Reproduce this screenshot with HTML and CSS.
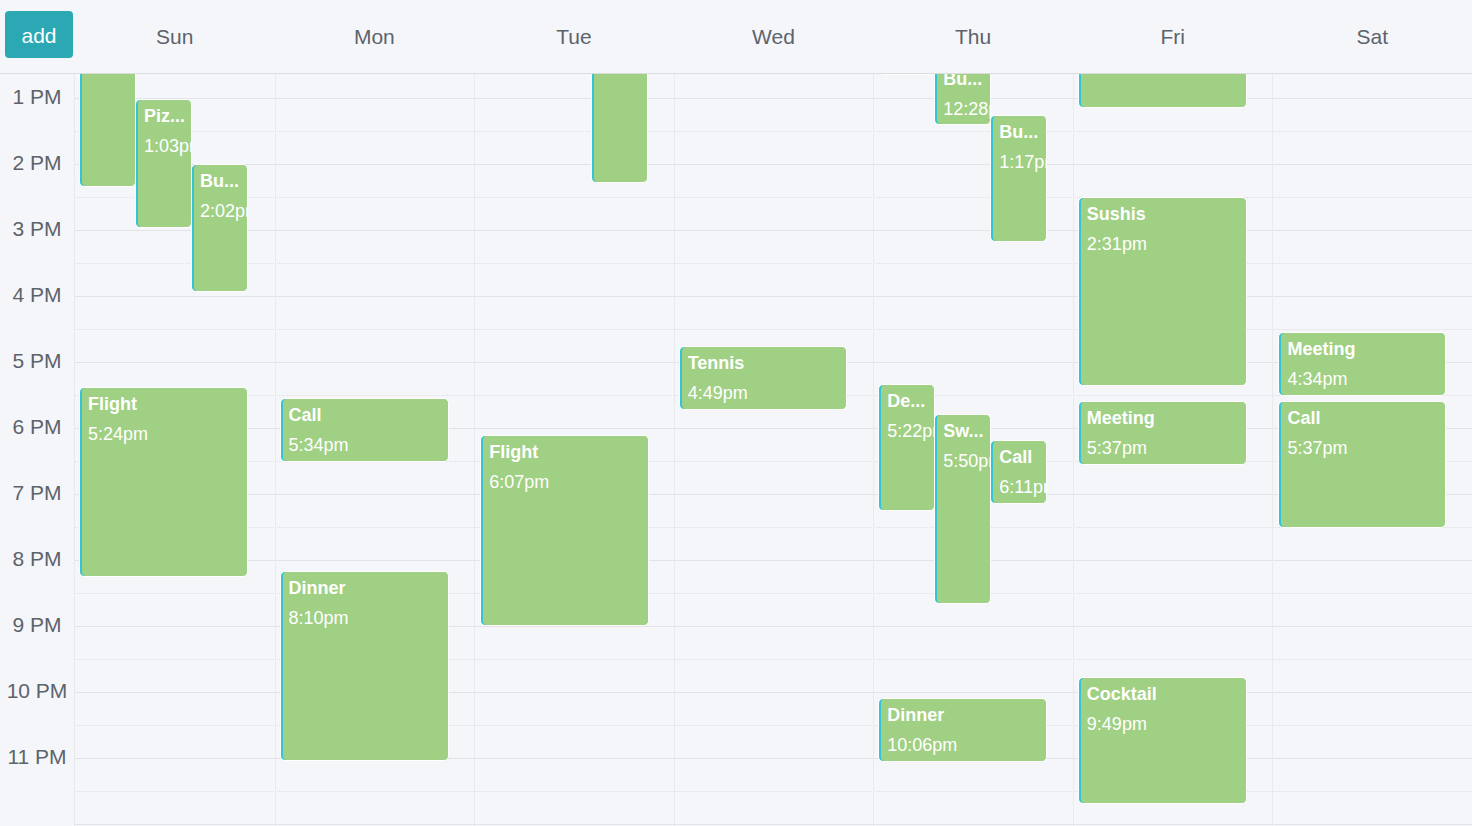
FILE: index.html
```html
<!DOCTYPE html>
<html lang="en">
<head>
<meta charset="utf-8">
<title>Week view</title>
<link rel="stylesheet" href="styles.css">
</head>
<body>
<div class="app">
  <header class="week-header">
    <div class="corner"><button class="add-btn">add</button></div>
    <div class="day-name">Sun</div>
    <div class="day-name">Mon</div>
    <div class="day-name">Tue</div>
    <div class="day-name">Wed</div>
    <div class="day-name">Thu</div>
    <div class="day-name">Fri</div>
    <div class="day-name">Sat</div>
  </header>
  <div class="viewport">
    <div class="scroll">
      <div class="hours">
        <div class="hour-label"></div>
        <div class="hour-label">1 PM</div>
        <div class="hour-label">2 PM</div>
        <div class="hour-label">3 PM</div>
        <div class="hour-label">4 PM</div>
        <div class="hour-label">5 PM</div>
        <div class="hour-label">6 PM</div>
        <div class="hour-label">7 PM</div>
        <div class="hour-label">8 PM</div>
        <div class="hour-label">9 PM</div>
        <div class="hour-label">10 PM</div>
        <div class="hour-label">11 PM</div>
      </div>
      <div class="days">
        <div class="lines">
          <div class="half solid"></div><div class="half dotted"></div>
          <div class="half solid"></div><div class="half dotted"></div>
          <div class="half solid"></div><div class="half dotted"></div>
          <div class="half solid"></div><div class="half dotted"></div>
          <div class="half solid"></div><div class="half dotted"></div>
          <div class="half solid"></div><div class="half dotted"></div>
          <div class="half solid"></div><div class="half dotted"></div>
          <div class="half solid"></div><div class="half dotted"></div>
          <div class="half solid"></div><div class="half dotted"></div>
          <div class="half solid"></div><div class="half dotted"></div>
          <div class="half solid"></div><div class="half dotted"></div>
          <div class="half solid"></div><div class="half dotted"></div>
          <div class="half solid end"></div>
        </div>

        <div class="day col-1">
          <div class="event" style="top:-67px;height:222px;left:4px;width:57px"></div>
          <div class="event" style="top:67px;height:129px;left:60px;width:57px"><div class="ev-title">Piz...</div><div class="ev-time">1:03pm</div></div>
          <div class="event" style="top:132px;height:128px;left:116px;width:57px"><div class="ev-title">Bu...</div><div class="ev-time">2:02pm</div></div>
          <div class="event" style="top:355px;height:190px;left:4px;width:169px"><div class="ev-title">Flight</div><div class="ev-time">5:24pm</div></div>
        </div>

        <div class="day col-2">
          <div class="event" style="top:366px;height:64px;left:4px;width:169px"><div class="ev-title">Call</div><div class="ev-time">5:34pm</div></div>
          <div class="event" style="top:539px;height:190px;left:4px;width:169px"><div class="ev-title">Dinner</div><div class="ev-time">8:10pm</div></div>
        </div>

        <div class="day col-3">
          <div class="event" style="top:-67px;height:218px;left:116px;width:57px"></div>
          <div class="event" style="top:403px;height:191px;left:5px;width:169px"><div class="ev-title">Flight</div><div class="ev-time">6:07pm</div></div>
        </div>

        <div class="day col-4">
          <div class="event" style="top:314px;height:64px;left:4px;width:168px"><div class="ev-title">Tennis</div><div class="ev-time">4:49pm</div></div>
        </div>

        <div class="day col-5">
          <div class="event" style="top:-67px;height:110px;left:4px;width:57px"></div>
          <div class="event" style="top:30px;height:63px;left:60px;width:57px"><div class="ev-title">Bu...</div><div class="ev-time">12:28pm</div></div>
          <div class="event" style="top:83px;height:127px;left:116px;width:57px"><div class="ev-title">Bu...</div><div class="ev-time">1:17pm</div></div>
          <div class="event" style="top:352px;height:127px;left:4px;width:57px"><div class="ev-title">De...</div><div class="ev-time">5:22pm</div></div>
          <div class="event" style="top:382px;height:190px;left:60px;width:57px"><div class="ev-title">Sw...</div><div class="ev-time">5:50pm</div></div>
          <div class="event" style="top:408px;height:64px;left:116px;width:57px"><div class="ev-title">Call</div><div class="ev-time">6:11pm</div></div>
          <div class="event" style="top:666px;height:64px;left:4px;width:169px"><div class="ev-title">Dinner</div><div class="ev-time">10:06pm</div></div>
        </div>

        <div class="day col-6">
          <div class="event" style="top:-34px;height:110px;left:4px;width:169px"></div>
          <div class="event" style="top:165px;height:189px;left:4px;width:169px"><div class="ev-title">Sushis</div><div class="ev-time">2:31pm</div></div>
          <div class="event" style="top:369px;height:64px;left:4px;width:169px"><div class="ev-title">Meeting</div><div class="ev-time">5:37pm</div></div>
          <div class="event" style="top:645px;height:127px;left:4px;width:169px"><div class="ev-title">Cocktail</div><div class="ev-time">9:49pm</div></div>
        </div>

        <div class="day col-7">
          <div class="event" style="top:300px;height:64px;left:5px;width:168px"><div class="ev-title">Meeting</div><div class="ev-time">4:34pm</div></div>
          <div class="event" style="top:369px;height:127px;left:5px;width:168px"><div class="ev-title">Call</div><div class="ev-time">5:37pm</div></div>
        </div>
      </div>
    </div>
  </div>
</div>
</body>
</html>
```

FILE: styles.css
```css
* { box-sizing: border-box; }

html, body {
  margin: 0;
  padding: 0;
  background: #f5f6fa;
}

body {
  font-family: "Liberation Sans", Arial, Helvetica, sans-serif;
  color: #5d636b;
  overflow: hidden;
}

.app {
  width: 1472px;
  height: 826px;
  display: flex;
  flex-direction: column;
  background: #f5f6fa;
}

.week-header {
  height: 74px;
  flex: 0 0 74px;
  display: flex;
  align-items: stretch;
  border-bottom: 1px solid #dcdde1;
  background: #f5f6fa;
  position: relative;
  z-index: 2;
}

.corner {
  width: 75px;
  flex: 0 0 75px;
  padding: 11px 0 0 5px;
}

.add-btn {
  width: 68px;
  height: 47px;
  border: none;
  border-radius: 4px;
  background: #2ba8b4;
  color: #ffffff;
  font-family: inherit;
  font-size: 21px;
  padding: 0;
  line-height: 49px;
}

.day-name {
  flex: 1 1 0;
  display: flex;
  align-items: center;
  justify-content: center;
  font-size: 21px;
  color: #5d636b;
  padding-top: 1px;
}

.viewport {
  flex: 1 1 auto;
  overflow: hidden;
}

.scroll {
  margin-top: -42px;
  display: flex;
}

.hours {
  width: 75px;
  flex: 0 0 75px;
  margin-top: -34px;
  border-right: 1px solid #e8e9ed;
}

.hour-label {
  height: 66px;
  display: flex;
  align-items: center;
  justify-content: center;
  font-size: 21px;
  color: #5d636b;
}

.days {
  flex: 1 1 auto;
  display: grid;
  grid-template-columns: repeat(7, 1fr);
  grid-template-rows: 794px;
}

.lines {
  grid-row: 1;
  grid-column: 1 / -1;
  display: flex;
  flex-direction: column;
}

.half {
  height: 33px;
  flex: 0 0 33px;
}

.half.solid { border-top: 1px solid #e3e4e8; }
.half.dotted { border-top: 1px dotted #dfe0e5; }
.half.end { height: 2px; flex-basis: 2px; }

.day {
  grid-row: 1;
  position: relative;
  border-left: 1px solid #e9eaee;
}

.days .day:nth-child(2) { border-left: none; }

.col-1 { grid-column: 1; }
.col-2 { grid-column: 2; }
.col-3 { grid-column: 3; }
.col-4 { grid-column: 4; }
.col-5 { grid-column: 5; }
.col-6 { grid-column: 6; }
.col-7 { grid-column: 7; }

.event {
  position: absolute;
  background: #a0d083;
  border: 1px solid #ffffff;
  border-radius: 5px;
  box-shadow: inset 2px 0 0 #33c4d8;
  padding: 5px 0 0 8px;
  overflow: hidden;
  color: #ffffff;
  font-size: 18px;
  line-height: 22px;
}

.ev-title {
  font-weight: bold;
  white-space: nowrap;
  overflow: hidden;
}

.ev-time {
  margin-top: 8px;
  white-space: nowrap;
  overflow: hidden;
}
```
